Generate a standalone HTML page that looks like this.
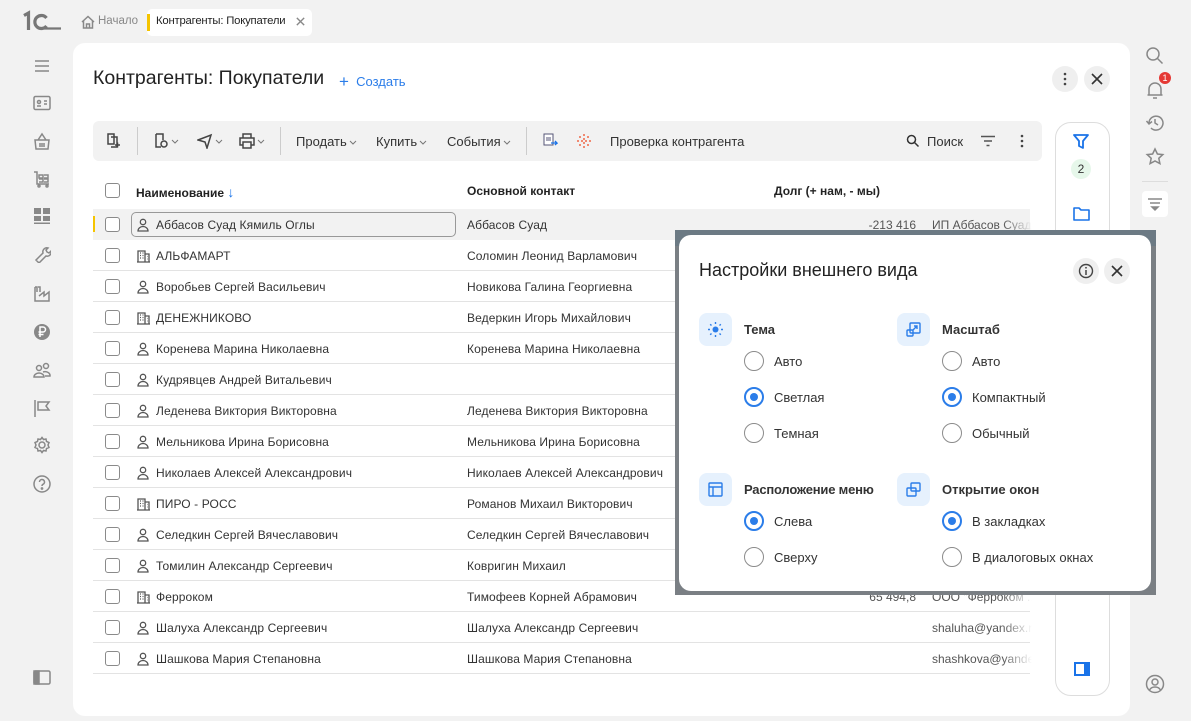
<!DOCTYPE html>
<html><head><meta charset="utf-8"><style>
*{box-sizing:border-box;margin:0;padding:0}
body{width:1191px;height:721px;background:#f2f2f2;font-family:"Liberation Sans",Arial,sans-serif;color:#333;font-size:12px;position:relative;overflow:hidden}
.a{position:absolute}
.ic{position:absolute;stroke:#888;fill:none;stroke-width:1.5}
.cb{position:absolute;width:15px;height:15px;border:1.3px solid #8a8a8a;border-radius:3px;background:#fff}
.row{position:absolute;left:93px;width:937px;height:31px;border-bottom:1px solid #e3e3e3}
.t{position:absolute;white-space:nowrap;font-size:12px;color:#333}
.rd{position:absolute;width:20px;height:20px;border:1.5px solid #8c8c8c;border-radius:50%}
.rd.on{border:2px solid #2b7de9}
.rd.on:after{content:"";position:absolute;left:4px;top:4px;width:8px;height:8px;border-radius:50%;background:#2b7de9}
.ib{position:absolute;width:33px;height:33px;border-radius:8px;background:#e6f1fd}
.lb{position:absolute;font-weight:bold;font-size:13px;color:#333;white-space:nowrap}
.op{position:absolute;font-size:13px;color:#333;white-space:nowrap}
.ch{display:inline-block;vertical-align:middle;margin-left:2px}
</style></head><body>
<!-- logo -->
<svg class="a" style="left:22px;top:10px" width="40" height="22" fill="none" stroke="#777"><path d="M2 5.5l4.5-2.5v17" stroke-width="3.2"/><path d="M24.5 8a6.5 6.5 0 1 0 0 8" stroke-width="3.2"/><path d="M22 18.5h17" stroke-width="2.2"/></svg>
<!-- tabs -->
<svg class="ic" style="left:80px;top:14px" width="16" height="16" viewBox="0 0 16 16"><path d="M2 8 8 2.5 14 8M3.5 7v7h9V7M6.5 14v-4h3v4"/></svg>
<div class="t" style="left:98px;top:15px;color:#888;font-size:11.5px">Начало</div>
<div class="a" style="left:147px;top:9px;width:165px;height:27px;background:#fff;border-radius:5px"></div>
<div class="a" style="left:147px;top:14px;width:3px;height:17px;background:#f5c400"></div>
<div class="t" style="left:156px;top:15px;font-size:11.3px;color:#222;letter-spacing:-0.2px">Контрагенты: Покупатели</div>
<svg class="ic" style="left:295px;top:16px" width="11" height="11" viewBox="0 0 12 12"><path d="M2 2l8 8M10 2l-8 8"/></svg>
<!-- left sidebar -->
<svg class="ic" style="left:34px;top:59px" width="16" height="14"><path d="M1 2h14M1 7h14M1 12h14"/></svg>
<svg class="ic" style="left:33px;top:95px" width="18" height="16"><rect x="1" y="1.5" width="16" height="13" rx="1.5"/><path d="M4 11h4M11 6h3M11 9h3"/><circle cx="6" cy="7" r="1.5"/></svg>
<svg class="ic" style="left:33px;top:132px" width="18" height="18"><path d="M2 8h14l-1 9H3zM5 8l4-6 4 6M7 11v4M9 11v4M11 11v4"/></svg>
<svg class="ic" style="left:33px;top:170px" width="18" height="18"><path d="M1 2h3v12h12M6 5h4v3H6zM11 5h4v3h-4M6 9h4v3H6M11 9h4v3h-4"/><circle cx="6" cy="16" r="1"/><circle cx="14" cy="16" r="1"/></svg>
<svg class="ic" style="left:33px;top:207px;fill:#888;stroke:none" width="18" height="18"><rect x="1" y="1" width="7" height="6"/><rect x="10" y="1" width="7" height="6"/><rect x="1" y="9" width="7" height="5"/><rect x="10" y="9" width="7" height="5"/><rect x="1" y="15.5" width="16" height="1.5"/></svg>
<svg class="ic" style="left:33px;top:245px" width="18" height="18"><path d="M3 15l7-7a4 4 0 0 1 5-5l-2 2 1 2 2 1 2-2a4 4 0 0 1-5 5l-7 7z"/></svg>
<svg class="ic" style="left:33px;top:285px" width="18" height="18"><path d="M2 2v14h14V7l-5 4V7l-5 4M2 2h2v5M5 2h2v5"/></svg>
<svg class="a" style="left:33px;top:323px" width="18" height="18"><circle cx="9" cy="9" r="8" fill="#888"/><path d="M7 14V4h3a2.5 2.5 0 0 1 0 5H5.5M5.5 11.5h5" stroke="#fff" stroke-width="1.5" fill="none"/></svg>
<svg class="ic" style="left:33px;top:361px" width="18" height="18"><circle cx="6" cy="7" r="2.5"/><circle cx="13" cy="5" r="2.5"/><path d="M1 16a5 4 0 0 1 10 0zM10 11a5 4 0 0 1 7 4h-5"/></svg>
<svg class="ic" style="left:33px;top:399px" width="18" height="18"><path d="M2 1v17M5 3h11l-3 4 3 4H5z"/></svg>
<svg class="ic" style="left:33px;top:436px" width="18" height="18"><circle cx="9" cy="9" r="3"/><path d="M9 1.5l1.5 2 2.5-.5.5 2.5 2.5 1-1 2.5 1 2.5-2.5 1-.5 2.5-2.5-.5-1.5 2-1.5-2-2.5.5-.5-2.5-2.5-1 1-2.5-1-2.5 2.5-1 .5-2.5 2.5.5z"/></svg>
<svg class="ic" style="left:33px;top:475px" width="18" height="18"><circle cx="9" cy="9" r="8"/><path d="M6.5 7a2.5 2.5 0 1 1 3.5 2.3c-.8.4-1 1-1 1.7"/><circle cx="9" cy="13.5" r=".6"/></svg>
<svg class="ic" style="left:33px;top:670px" width="18" height="15"><rect x="1" y="1" width="16" height="13" rx="1.5"/><rect x="1" y="1" width="5" height="13" fill="#888"/></svg>
<!-- right sidebar -->
<svg class="ic" style="left:1145px;top:46px" width="20" height="20"><circle cx="8" cy="8" r="6"/><path d="M12.5 12.5l5 5"/></svg>
<svg class="ic" style="left:1146px;top:80px" width="18" height="20"><path d="M3 15V9a6 6 0 0 1 12 0v6zM1.5 15h15M7 18h4"/></svg>
<div class="a" style="left:1159px;top:72px;width:12px;height:12px;border-radius:50%;background:#e53935;color:#fff;font-size:9px;text-align:center;line-height:12px">1</div>
<svg class="ic" style="left:1145px;top:113px" width="20" height="20"><path d="M4 10a7 7 0 1 1 2 5M1.5 8l2.5 3 3-2.5M10 6v4l3 2"/></svg>
<svg class="ic" style="left:1145px;top:147px" width="20" height="20"><path d="M10 2l2.4 5 5.4.6-4 3.7 1.1 5.3L10 14l-4.9 2.6 1.1-5.3-4-3.7 5.4-.6z"/></svg>
<div class="a" style="left:1142px;top:181px;width:26px;height:1px;background:#ddd"></div>
<div class="a" style="left:1142px;top:191px;width:26px;height:26px;background:#fff;border-radius:4px"></div>
<svg class="ic" style="left:1147px;top:196px" width="16" height="16"><path d="M1 3h14M3 7h10"/><path d="M5 11h6l-3 3z" fill="#888"/></svg>
<svg class="ic" style="left:1145px;top:674px" width="20" height="20"><circle cx="10" cy="10" r="8.5"/><circle cx="10" cy="8" r="3"/><path d="M4.5 16a6 5 0 0 1 11 0"/></svg>
<!-- main panel -->
<div class="a" style="left:73px;top:43px;width:1057px;height:673px;background:#fff;border-radius:12px"></div>
<div class="t" style="left:93px;top:67px;font-size:19.5px;color:#222">Контрагенты: Покупатели</div>
<div class="t" style="left:339px;top:71px;font-size:13px;color:#2b7de9"><span style="font-size:17px;position:relative;top:1px">+</span>&nbsp; Создать</div>
<div class="a" style="left:1052px;top:66px;width:26px;height:26px;border-radius:50%;background:#efefef"></div>
<svg class="a" style="left:1060px;top:71px" width="10" height="16"><circle cx="5" cy="3" r="1.3" fill="#444"/><circle cx="5" cy="8" r="1.3" fill="#444"/><circle cx="5" cy="13" r="1.3" fill="#444"/></svg>
<div class="a" style="left:1084px;top:66px;width:26px;height:26px;border-radius:50%;background:#efefef"></div>
<svg class="a" style="left:1091px;top:73px" width="12" height="12"><path d="M1 1l10 10M11 1L1 11" stroke="#333" stroke-width="1.6"/></svg>
<!-- toolbar -->
<div class="a" style="left:93px;top:121px;width:949px;height:40px;background:#f2f2f2;border-radius:6px"></div>
<svg class="ic" style="left:106px;top:133px;stroke:#444" width="16" height="16"><path d="M2 1h6v10H2zM5 4h6v10H5M9 12h5M11.5 9.5v5"/></svg>
<div class="a" style="left:137px;top:127px;width:1px;height:28px;background:#ccc"></div>
<svg class="ic" style="left:153px;top:133px;stroke:#444" width="16" height="16"><path d="M3 1h7v6M3 1v13h5"/><circle cx="11" cy="11" r="3"/></svg>
<svg class="ic" style="left:171px;top:139px;stroke:#777;stroke-width:1" width="8" height="5"><path d="M1 1l3 3 3-3"/></svg>
<svg class="ic" style="left:197px;top:133px;stroke:#444" width="16" height="16"><path d="M1 7l13-5-4 13-2-6z"/></svg>
<svg class="ic" style="left:215px;top:139px;stroke:#777;stroke-width:1" width="8" height="5"><path d="M1 1l3 3 3-3"/></svg>
<svg class="ic" style="left:239px;top:133px;stroke:#444" width="16" height="16"><path d="M4 5V1h8v4M4 12H1V5h14v7h-3M4 9h8v6H4z"/></svg>
<svg class="ic" style="left:257px;top:139px;stroke:#777;stroke-width:1" width="8" height="5"><path d="M1 1l3 3 3-3"/></svg>
<div class="a" style="left:280px;top:127px;width:1px;height:28px;background:#ccc"></div>
<div class="t" style="left:296px;top:134px;font-size:13px">Продать<svg class="ch" width="8" height="5"><path d="M1 1l3 3 3-3" stroke="#777" fill="none"/></svg></div>
<div class="t" style="left:376px;top:134px;font-size:13px">Купить<svg class="ch" width="8" height="5"><path d="M1 1l3 3 3-3" stroke="#777" fill="none"/></svg></div>
<div class="t" style="left:447px;top:134px;font-size:13px">События<svg class="ch" width="8" height="5"><path d="M1 1l3 3 3-3" stroke="#777" fill="none"/></svg></div>
<div class="a" style="left:526px;top:127px;width:1px;height:28px;background:#ccc"></div>
<svg class="a" style="left:543px;top:133px" width="15" height="15"><rect x="1" y="1" width="9" height="11" fill="#fff" stroke="#557" stroke-width="1"/><path d="M3 5h5M3 7h5" stroke="#557"/><path d="M8 10h6l-2-2M14 10l-2 2" stroke="#1a73e8" stroke-width="1.3" fill="none"/></svg>
<svg class="a" style="left:576px;top:133px" width="16" height="16"><g fill="#f06a4a"><circle cx="8" cy="2" r="1"/><circle cx="8" cy="14" r="1"/><circle cx="2" cy="8" r="1"/><circle cx="14" cy="8" r="1"/><circle cx="4" cy="4" r="1"/><circle cx="12" cy="12" r="1"/><circle cx="12" cy="4" r="1"/><circle cx="4" cy="12" r="1"/><circle cx="8" cy="6" r="1"/><circle cx="8" cy="10" r="1"/><circle cx="6" cy="8" r="1"/><circle cx="10" cy="8" r="1"/></g></svg>
<div class="t" style="left:610px;top:134px;font-size:13px">Проверка контрагента</div>
<svg class="ic" style="left:906px;top:134px;stroke:#333" width="14" height="14"><circle cx="5.5" cy="5.5" r="4"/><path d="M8.5 8.5l4 4"/></svg>
<div class="t" style="left:927px;top:134px;font-size:13px">Поиск</div>
<svg class="ic" style="left:980px;top:135px;stroke:#555" width="16" height="12"><path d="M1 1.5h14M4 6h8M6.5 10.5h3"/></svg>
<svg class="a" style="left:1017px;top:133px" width="10" height="16"><circle cx="5" cy="3" r="1.3" fill="#444"/><circle cx="5" cy="8" r="1.3" fill="#444"/><circle cx="5" cy="13" r="1.3" fill="#444"/></svg>
<!-- right filter panel -->
<div class="a" style="left:1055px;top:122px;width:55px;height:574px;border:1px solid #ddd;border-radius:16px;background:#fff"></div>
<svg class="a" style="left:1073px;top:134px" width="16" height="16"><path d="M1 1h14l-5 6v7l-4-2V7z" stroke="#1a73e8" stroke-width="1.8" fill="none" stroke-linejoin="round"/></svg>
<div class="a" style="left:1071px;top:159px;width:20px;height:20px;border-radius:50%;background:#e6f7ea;text-align:center;line-height:20px;font-size:12px;color:#333">2</div>
<svg class="a" style="left:1073px;top:206px" width="17" height="15"><path d="M1 2h5l2 2h8v10H1z" stroke="#1a73e8" stroke-width="1.6" fill="none" stroke-linejoin="round"/></svg>
<svg class="a" style="left:1074px;top:662px" width="16" height="14"><rect x="0" y="0" width="16" height="14" fill="#1a73e8"/><rect x="2" y="2" width="8" height="10" fill="#fff"/></svg>
<!-- table header -->
<div class="cb" style="left:105px;top:183px"></div>
<div class="t" style="left:136px;top:184px;font-weight:bold;font-size:12px;color:#222">Наименование <span style="color:#1a73e8;font-weight:normal;font-size:14px">&#8595;</span></div>
<div class="t" style="left:467px;top:184px;font-weight:bold;font-size:12px;color:#222">Основной контакт</div>
<div class="t" style="left:774px;top:184px;font-weight:bold;font-size:12px;color:#222">Долг (+ нам, - мы)</div>
<div id="rows"></div>
<script>
var d=[["p","Аббасов Суад Кямиль Оглы","Аббасов Суад","-213 416","ИП Аббасов Суад К"],["b","АЛЬФАМАРТ","Соломин Леонид Варламович"],["p","Воробьев Сергей Васильевич","Новикова Галина Георгиевна"],["b","ДЕНЕЖНИКОВО","Ведеркин Игорь Михайлович"],["p","Коренева Марина Николаевна","Коренева Марина Николаевна"],["p","Кудрявцев Андрей Витальевич",""],["p","Леденева Виктория Викторовна","Леденева Виктория Викторовна"],["p","Мельникова Ирина Борисовна","Мельникова Ирина Борисовна"],["p","Николаев Алексей Александрович","Николаев Алексей Александрович"],["b","ПИРО - РОСС","Романов Михаил Викторович"],["p","Селедкин Сергей Вячеславович","Селедкин Сергей Вячеславович"],["p","Томилин Александр Сергеевич","Ковригин Михаил"],["b","Ферроком","Тимофеев Корней Абрамович","65 494,8","ООО \"Ферроком ..."],["p","Шалуха Александр Сергеевич","Шалуха Александр Сергеевич","","shaluha@yandex.ru"],["p","Шашкова Мария Степановна","Шашкова Мария Степановна","","shashkova@yandex"]];
var h="";var P='<svg class="ic" style="left:137px;top:TOPpx;stroke:#555;stroke-width:1.3" width="12" height="14"><circle cx="6" cy="4" r="2.7"/><path d="M1 13a5 4.5 0 0 1 10 0z"/></svg>';
var B='<svg class="ic" style="left:137px;top:TOPpx;stroke:#555;stroke-width:1.3" width="13" height="14"><path d="M1 13V2h7v11M8 5h4v8M0 13h13M3 4h1M5.5 4h1M3 6.5h1M5.5 6.5h1M3 9h1M5.5 9h1M10 7.5h.5M10 10h.5"/></svg>';
d.forEach(function(r,i){var y=209+31*i;
h+='<div class="row" style="top:'+y+'px;'+(i==0?'background:#f2f2f2;border-bottom:none':'')+'"></div>';
if(i==0){h+='<div class="a" style="left:93px;top:216px;width:2px;height:16px;background:#f5c400"></div><div class="a" style="left:131px;top:212px;width:325px;height:25px;border:1px solid #999;border-radius:5px;background:#fff0"></div>';}
h+='<div class="cb" style="left:105px;top:'+(y+8)+'px"></div>';
h+=(r[0]=="p"?P:B).replace("TOP",y+9);
h+='<div class="t" style="left:156px;top:'+(y+9)+'px;letter-spacing:.1px">'+r[1]+'</div>';
h+='<div class="t" style="left:467px;top:'+(y+9)+'px;letter-spacing:.1px">'+r[2]+'</div>';
if(r[3])h+='<div class="t" style="right:275px;top:'+(y+9)+'px;color:#555">'+r[3]+'</div>';
if(r[4])h+='<div class="t" style="left:932px;top:'+(y+9)+'px;color:#555;width:100px;overflow:hidden;-webkit-mask-image:linear-gradient(90deg,#000 70%,transparent)">'+r[4]+'</div>';
});
document.getElementById("rows").innerHTML=h;
</script>
<!-- overlay dialog -->
<div class="a" style="left:675px;top:230px;width:481px;height:365px;background:#7a7f84"></div>
<div class="a" style="left:675px;top:230px;width:481px;height:16px;background:#6c7a84"></div>
<div class="a" style="left:679px;top:235px;width:472px;height:356px;background:#fff;border-radius:12px"></div>
<div class="t" style="left:699px;top:260px;font-size:18px;color:#222">Настройки внешнего вида</div>
<div class="a" style="left:1073px;top:258px;width:26px;height:26px;border-radius:50%;background:#efefef"></div>
<svg class="a" style="left:1078px;top:263px" width="16" height="16"><circle cx="8" cy="8" r="6.5" stroke="#444" stroke-width="1.4" fill="none"/><path d="M8 7v5" stroke="#444" stroke-width="1.5"/><circle cx="8" cy="4.8" r=".9" fill="#444"/></svg>
<div class="a" style="left:1104px;top:258px;width:26px;height:26px;border-radius:50%;background:#efefef"></div>
<svg class="a" style="left:1111px;top:265px" width="12" height="12"><path d="M1 1l10 10M11 1L1 11" stroke="#333" stroke-width="1.6"/></svg>

<div class="ib" style="left:699px;top:313px"></div>
<svg class="a" style="left:707px;top:321px" width="17" height="17"><circle cx="8.5" cy="8.5" r="3" fill="#2b7de9"/><g stroke="#2b7de9" stroke-width="1.4"><path d="M8.5 1v2M8.5 14v2M1 8.5h2M14 8.5h2M3.2 3.2l1.3 1.3M12.5 12.5l1.3 1.3M3.2 13.8l1.3-1.3M12.5 4.5l1.3-1.3"/></g></svg>
<div class="lb" style="left:744px;top:322px">Тема</div>
<div class="rd" style="left:744px;top:351px"></div><div class="op" style="left:774px;top:354px">Авто</div>
<div class="rd on" style="left:744px;top:387px"></div><div class="op" style="left:774px;top:390px">Светлая</div>
<div class="rd" style="left:744px;top:423px"></div><div class="op" style="left:774px;top:426px">Темная</div>

<div class="ib" style="left:897px;top:313px"></div>
<svg class="a" style="left:906px;top:322px" width="15" height="15" fill="none" stroke="#2b7de9" stroke-width="1.4"><rect x="4" y="1" width="10" height="10" rx="1"/><rect x="1" y="8" width="6" height="6" rx="1"/><path d="M7 8l4-4M8 4h3v3"/></svg>
<div class="lb" style="left:942px;top:322px">Масштаб</div>
<div class="rd" style="left:942px;top:351px"></div><div class="op" style="left:972px;top:354px">Авто</div>
<div class="rd on" style="left:942px;top:387px"></div><div class="op" style="left:972px;top:390px">Компактный</div>
<div class="rd" style="left:942px;top:423px"></div><div class="op" style="left:972px;top:426px">Обычный</div>

<div class="ib" style="left:699px;top:473px"></div>
<svg class="a" style="left:708px;top:482px" width="15" height="15" fill="none" stroke="#2b7de9" stroke-width="1.4"><rect x="1" y="1" width="13" height="13" rx="1"/><path d="M1 5h13M5 5v9"/></svg>
<div class="lb" style="left:744px;top:482px;letter-spacing:-0.2px">Расположение меню</div>
<div class="rd on" style="left:744px;top:511px"></div><div class="op" style="left:774px;top:514px">Слева</div>
<div class="rd" style="left:744px;top:547px"></div><div class="op" style="left:774px;top:550px">Сверху</div>

<div class="ib" style="left:897px;top:473px"></div>
<svg class="a" style="left:906px;top:482px" width="15" height="15" fill="none" stroke="#2b7de9" stroke-width="1.4"><rect x="5" y="1" width="9" height="8" rx="1"/><rect x="1" y="6" width="9" height="8" rx="1"/></svg>
<div class="lb" style="left:942px;top:482px">Открытие окон</div>
<div class="rd on" style="left:942px;top:511px"></div><div class="op" style="left:972px;top:514px">В закладках</div>
<div class="rd" style="left:942px;top:547px"></div><div class="op" style="left:972px;top:550px">В диалоговых окнах</div>
</body></html>
